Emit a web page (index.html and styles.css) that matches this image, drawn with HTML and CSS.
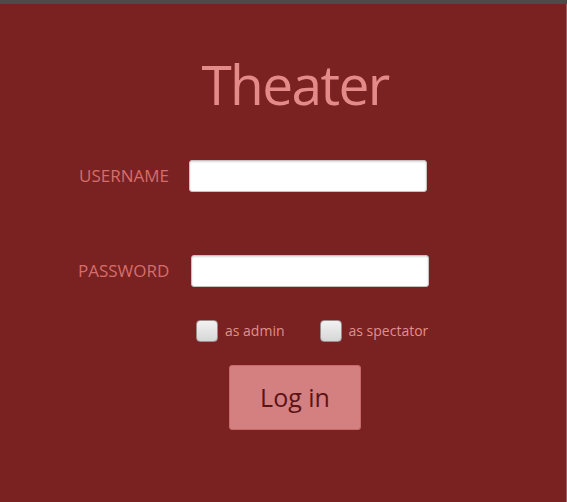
FILE: index.html
```html
<!DOCTYPE html>
<html>
<head>
<meta charset="utf-8">
<link rel="stylesheet" href="styles.css">
</head>
<body>
<div class="topbar"></div>
<main class="panel">
  <h1 class="title">Theater</h1>
  <div class="row row-user">
    <label class="label" for="u">USERNAME</label>
    <input class="field" id="u" type="text">
  </div>
  <div class="row row-pass">
    <label class="label" for="p">PASSWORD</label>
    <input class="field" id="p" type="password">
  </div>
  <div class="checks">
    <label class="check"><span class="box"></span><span class="check-text">as admin</span></label>
    <label class="check"><span class="box"></span><span class="check-text">as spectator</span></label>
  </div>
  <div class="actions">
    <button class="btn" type="button">Log in</button>
  </div>
</main>
</body>
</html>
```

FILE: styles.css
```css
html, body {
  margin: 0;
  padding: 0;
  height: 100%;
  background: #7a2121;
  font-family: "Open Sans", "Noto Sans", sans-serif;
}
body {
  display: flex;
  flex-direction: column;
}
.topbar {
  height: 4px;
  background: #4d4a4a;
  flex: none;
}
.panel {
  flex: 1;
  background: #7a2121;
  border-right: 1px solid #a06262;
  display: flex;
  flex-direction: column;
}
.title {
  margin: 46px 0 0 0;
  text-align: center;
  padding-left: 24px;
  font-weight: 400;
  font-size: 55px;
  line-height: 68px;
  letter-spacing: -1.6px;
  color: #e48b89;
}
.row {
  display: flex;
  align-items: center;
  height: 33px;
}
.row-user {
  margin-top: 41px;
  padding-left: 79px;
}
.row-pass {
  margin-top: 62px;
  padding-left: 78px;
}
.label {
  font-size: 17px;
  color: #d66d6b;
  letter-spacing: 0;
}
.row-user .label { width: 110px; }
.row-pass .label { width: 113px; }
.field {
  box-sizing: border-box;
  width: 238px;
  height: 32px;
  border: 1px solid #c8c0c0;
  border-radius: 3px;
  background: #ffffff;
  box-shadow: inset 0 1px 2px rgba(0,0,0,0.15);
  margin: 0;
}
.checks {
  display: flex;
  margin-top: 33px;
  padding-left: 196px;
  gap: 35px;
  height: 22px;
}
.check {
  display: flex;
  align-items: center;
  gap: 7px;
}
.box {
  box-sizing: border-box;
  width: 22px;
  height: 22px;
  border: 1px solid #9c8c8c;
  border-radius: 4px;
  background: linear-gradient(#f2f2f2, #d6d6d6);
}
.check-text {
  font-size: 14px;
  color: #e0908e;
  letter-spacing: 0;
  margin-top: -2px;
}
.actions {
  margin-top: 23px;
  padding-left: 229px;
}
.btn {
  width: 132px;
  height: 65px;
  border: 1px solid #c86a6c;
  border-radius: 3px;
  background: #d47f80;
  color: #5c1416;
  font-family: "Open Sans", "Noto Sans", sans-serif;
  font-size: 25px;
  padding: 0 0 2px 0;
}
```
